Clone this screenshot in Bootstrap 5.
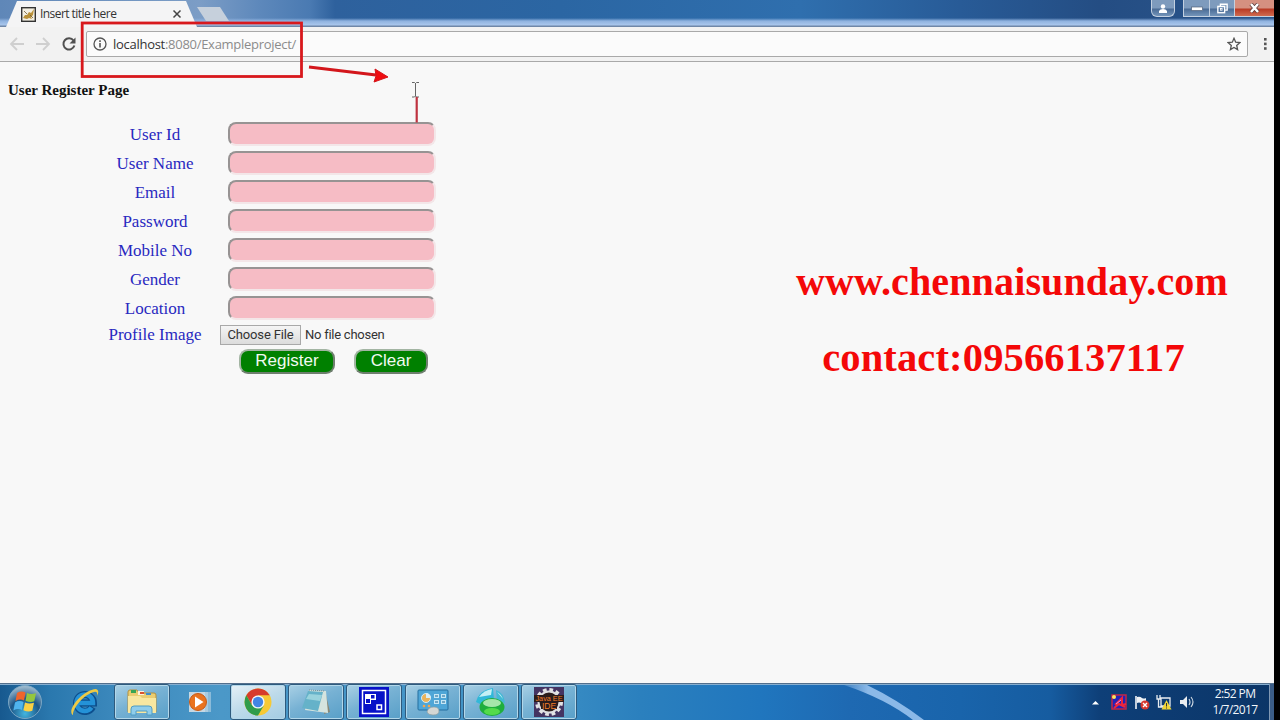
<!DOCTYPE html>
<html lang="en">
<head>
  <meta charset="UTF-8" />
  <meta name="viewport" content="width=device-width, initial-scale=1.0"/>
  <title>Insert title here</title>
  <link href="https://cdn.jsdelivr.net/npm/bootstrap@5.3.0/dist/css/bootstrap.min.css" rel="stylesheet">
  <style>
    body {
      background-color: #000;
      overflow: hidden;
    }

    svg {
      display: block;
      flex-shrink: 0;
    }

    .desktop {
      width: 1274px;
      height: 720px;
      background-color: #f8f8f8;
    }

    /* browser window */
    .titlebar {
      height: 27px;
      padding-left: 6px;
      background:
        linear-gradient(180deg, transparent 18px, #8fb2df 21px, #a9c6ec 25px, #6f87a8 26px),
        linear-gradient(90deg, #5f87b8 0, #7c9dc6 200px, #5d88bb 260px, #4a7ab2 310px, #2e619d 335px, #2b66a3 560px, #2f6fae 800px, #285b97 960px, #244d83 1100px, #2b568c 1274px);
    }

    .browser-tab {
      width: 191px;
      height: 26px;
      margin-top: 1px;
      padding: 0 15px 0 15px;
      background-color: #f4f4f5;
      clip-path: polygon(0 100%, 11px 0, 180px 0, 100% 100%);
      font: 12px/26px "Open Sans", sans-serif;
      color: #333;
    }

    .tab-title {
      letter-spacing: -0.55px;
      margin-left: 4px;
    }

    .new-tab {
      width: 32px;
      height: 14px;
      margin-top: 7px;
      background-color: #c6d0dc;
      clip-path: polygon(0 0, 23px 0, 100% 100%, 9px 100%);
    }

    .win-btn {
      height: 17px;
      border: 1px solid #c3d0e0;
      border-top: 0;
      background: linear-gradient(#7e9bbd 0 8px, #4a6b95 9px, #7394b9);
    }

    .win-close {
      background: linear-gradient(#d59080 0 8px, #b93a24 9px, #cf6b50);
    }

    .toolbar {
      height: 35px;
      padding: 0 2px 0 8px;
      background-color: #f2f2f2;
      border-bottom: 1px solid #a9a9a9;
    }

    .address {
      width: 1162px;
      height: 26px;
      margin-left: 8px;
      padding: 0 6px 0 6px;
      background-color: #fbfbfb;
      border: 1px solid #a9a9a9;
      border-radius: 2px;
      font: 13px/24px "Open Sans", sans-serif;
      color: #8b8b8b;
    }

    .url {
      margin-left: 6px;
      letter-spacing: -0.28px;
    }

    .url span {
      color: #333;
    }

    /* register page */
    .page {
      height: 621px;
      font-family: "Liberation Serif", serif;
    }

    .page-title {
      font-size: 15px;
      line-height: 18px;
      font-weight: bold;
      color: #111;
      margin: 19px 0 20px 8px;
    }

    .register {
      width: 346px;
      margin-left: 90px;
    }

    .field {
      height: 29px;
    }

    .field-label {
      width: 130px;
      padding-top: 2px;
      font: 17px/20px "Liberation Serif", serif;
      color: #2828c0;
      text-align: center;
    }

    .file-label {
      padding-top: 0;
    }

    .field-input {
      width: 208px;
      height: 24px;
      margin-left: 8px;
      background-color: #f6bcc5;
      border: 2px solid;
      border-color: #979393 #f3e6e8 #f3e6e8 #979393;
      border-radius: 8px;
      outline: 0;
    }

    .file-row {
      height: 25px;
      font: 13px/18px Roboto, sans-serif;
      letter-spacing: -0.25px;
      color: #333;
    }

    .file-row .field-label {
      letter-spacing: 0;
    }

    .choose {
      width: 81px;
      height: 20px;
      padding: 0;
      border: 1px solid #a9a9a9;
      background: linear-gradient(#f5f5f5, #dcdcdc);
      color: #333;
      letter-spacing: -0.15px;
    }

    .form-btns {
      gap: 19px;
      margin-top: 2px;
      padding-right: 8px;
    }

    .form-btn {
      height: 25px;
      padding: 0 0 2px;
      border: 2px solid;
      border-color: #a3b5a3 #6f7f6f #6f7f6f #a3b5a3;
      border-radius: 9px;
      background-color: #008000;
      color: #f1faf1;
      font: 17px/19px "Liberation Sans", sans-serif;
    }

    .register-btn { width: 96px; }
    .clear-btn { width: 74px; }

    .promo {
      width: 440px;
      margin: 130px 42px 0 0;
      font-size: 40px;
      line-height: 76px;
      font-weight: bold;
      letter-spacing: 0.14px;
      color: #f40808;
      white-space: nowrap;
    }

    .contact-line {
      font-size: 40.5px;
      padding-right: 17px;
    }

    /* taskbar */
    .taskbar {
      height: 37px;
      border-top: 1px solid #536f8c;
      background: linear-gradient(90deg, #17598f 0, #2a78ae 50px, #3a87bb 110px, #4b98c8 220px, #3f92c6 520px, #2b80be 640px, #2076be 760px, #1e69b2 850px, #1964ab 960px, #165ca0 1050px, #0e3f78 1100px, #0b3567 1274px);
      box-shadow: inset 0 1px #86aed0;
    }

    .task {
      width: 56px;
      height: 36px;
      margin-right: 2.1px;
    }

    .task-open {
      border: 1px solid #2e5a7d;
      border-radius: 3px;
      box-shadow: inset 0 0 0 1px #b2d7ea;
      background: linear-gradient(155deg, #a9d0e5 0, #78b2d4 45%, #589fc8 100%);
    }

    .task-active {
      background: linear-gradient(155deg, #e6f1f7 0, #bddaea 50%, #a3cce3 100%);
    }

    .streak {
      left: 840px;
      top: 1px;
    }

    .clock {
      width: 60px;
      font: 12px/16px "Open Sans", sans-serif;
      letter-spacing: -0.6px;
      color: #f2f6fa;
    }

    .show-desktop {
      width: 5px;
      height: 36px;
      background-color: #3a5c86;
      border-left: 1px solid #8098b4;
    }

    .markup {
      left: 0;
      top: 0;
      pointer-events: none;
    }
  </style>
</head>
<body>
  <div class="desktop position-relative d-flex flex-column">

    <div class="titlebar d-flex align-items-start">
      <div class="browser-tab d-flex align-items-center">
        <svg width="15" height="15" viewBox="0 0 15 15">
          <rect x=".7" y=".7" width="13.6" height="13.6" fill="#f3efe2" stroke="#333" stroke-width="1.4"/>
          <path d="M2 11l2-3 2 0 2-3 2 1 3-4-1 6-2 2 1 2-3-1-2 1z" fill="#b9913a"/>
          <path d="M3 4l3 3M9 8l3 3" stroke="#6f5a35" stroke-width=".8"/>
        </svg>
        <span class="tab-title">Insert title here</span>
        <svg class="ms-auto" width="10" height="10" viewBox="0 0 10 10"><path d="M1.5 1.5l7 7m0-7l-7 7" stroke="#444" stroke-width="1.5"/></svg>
      </div>
      <div class="new-tab"></div>
      <div class="d-flex ms-auto">
        <div class="win-btn rounded-bottom d-flex justify-content-center align-items-center me-2" style="width: 24px">
          <svg width="10" height="9" viewBox="0 0 10 9"><circle cx="5" cy="2.5" r="2.2" fill="#fff"/><path d="M1 9V7q1-2 4-2t4 2v2z" fill="#fff"/></svg>
        </div>
        <div class="win-btn d-flex justify-content-center align-items-center" style="width: 27px">
          <svg width="12" height="5" viewBox="0 0 12 5"><rect x=".5" y="1" width="11" height="3.5" fill="#fff" stroke="#52627a" stroke-width=".7"/></svg>
        </div>
        <div class="win-btn border-start-0 d-flex justify-content-center align-items-center" style="width: 25px">
          <svg width="11" height="11" viewBox="0 0 13 12" fill="none" stroke="#fff" stroke-width="1.6"><path d="M4 3V1h8v7H9.5"/><rect x="1" y="3.5" width="8" height="7.500"/><rect x="4" y="6" width="2" height="2" stroke-width="1"/></svg>
        </div>
        <div class="win-btn win-close border-start-0 border-end-0 d-flex justify-content-center align-items-center" style="width: 39px">
          <svg width="11" height="10" viewBox="0 0 11 10"><path d="M2 1l7 8m0-8L2 9" stroke="#5b3a3a" stroke-width="4"/><path d="M2 1l7 8m0-8L2 9" stroke="#fff" stroke-width="2.5"/></svg>
        </div>
      </div>
    </div>

    <div class="toolbar d-flex align-items-center">
      <svg width="18" height="16" viewBox="0 0 18 16" fill="none" stroke="#cfcfcf" stroke-width="1.8"><path d="M16 8H3M9 2L3 8l6 6"/></svg>
      <svg class="ms-2" width="18" height="16" viewBox="0 0 18 16" fill="none" stroke="#cfcfcf" stroke-width="1.8"><path d="M2 8h13M9 2l6 6-6 6"/></svg>
      <svg class="ms-2" width="18" height="16" viewBox="0 0 18 16"><path d="M13.5 4.500A5.600 5.600 0 1 0 14.400 9.500" fill="none" stroke="#505050" stroke-width="2"/><path d="M15.500 1.500v6h-6z" fill="#505050"/></svg>
      <div class="address d-flex align-items-center">
        <svg width="14" height="14" viewBox="0 0 14 14"><circle cx="7" cy="7" r="6" fill="none" stroke="#555" stroke-width="1.3"/><path d="M7 6v4.500M7 3.300v1.600" stroke="#555" stroke-width="1.6"/></svg>
        <span class="url"><span>localhost</span>:8080/Exampleproject/</span>
        <svg class="ms-auto" width="14" height="14" viewBox="0 0 14 14"><path d="M7 1.300l1.700 3.900 4.200.4-3.200 2.800.9 4.200L7 10.400l-3.600 2.200.9-4.200L1.100 5.600l4.200-.4z" fill="none" stroke="#555" stroke-width="1.3"/></svg>
      </div>
      <svg class="ms-auto me-1" width="6" height="14" viewBox="0 0 6 14" fill="#555"><rect x="2" y="1" width="2.6" height="2.6"/><rect x="2" y="5.6" width="2.6" height="2.6"/><rect x="2" y="10.2" width="2.6" height="2.6"/></svg>
    </div>

    <div class="page d-flex justify-content-between">
      <div>
        <h1 class="page-title">User Register Page</h1>
        <form class="register">
          <div class="field d-flex align-items-center"><label class="field-label" for="userId">User Id</label><input type="text" class="field-input" id="userId"></div>
          <div class="field d-flex align-items-center"><label class="field-label" for="userName">User Name</label><input type="text" class="field-input" id="userName"></div>
          <div class="field d-flex align-items-center"><label class="field-label" for="email">Email</label><input type="text" class="field-input" id="email"></div>
          <div class="field d-flex align-items-center"><label class="field-label" for="password">Password</label><input type="password" class="field-input" id="password"></div>
          <div class="field d-flex align-items-center"><label class="field-label" for="mobile">Mobile No</label><input type="text" class="field-input" id="mobile"></div>
          <div class="field d-flex align-items-center"><label class="field-label" for="gender">Gender</label><input type="text" class="field-input" id="gender"></div>
          <div class="field d-flex align-items-center"><label class="field-label" for="location">Location</label><input type="text" class="field-input" id="location"></div>
          <div class="file-row d-flex align-items-center">
            <span class="field-label file-label">Profile Image</span>
            <button type="button" class="choose">Choose File</button>
            <span class="ms-1">No file chosen</span>
          </div>
          <div class="form-btns d-flex justify-content-end">
            <button type="button" class="form-btn register-btn">Register</button>
            <button type="reset" class="form-btn clear-btn">Clear</button>
          </div>
        </form>
      </div>
      <div class="promo text-center">
        <div class="mt-5 pt-1">www.chennaisunday.com</div>
        <div class="contact-line">contact:09566137117</div>
      </div>
    </div>

    <div class="taskbar position-relative d-flex align-items-center">
      <svg class="streak position-absolute" width="90" height="35" viewBox="0 0 90 35">
        <defs><linearGradient id="glow"><stop offset="0" stop-color="#8bb9e8" stop-opacity=".3"/><stop offset=".3" stop-color="#8bb9e8"/></linearGradient></defs>
        <path d="M4 0h23Q58 15 84 35H73Q46 14 4 0z" fill="url(#glow)"/>
      </svg>
      <!-- start -->
      <svg style="margin-left: 7px; margin-right: 12px" width="37" height="36" viewBox="0 0 37 36">
        <defs><radialGradient id="orb" cx=".5" cy=".85" r=".9"><stop offset="0" stop-color="#43b5df"/><stop offset=".5" stop-color="#1c5687"/><stop offset="1" stop-color="#b9d0de"/></radialGradient></defs>
        <circle cx="18" cy="18" r="16.5" fill="url(#orb)" stroke="#7aa6c4"/>
        <path d="M10 9q4-2.500 8.500-.5l-1.500 8q-4-2-8.500.5z" fill="#ef652c"/>
        <path d="M20 9q4 2 9 .3l-1.700 8q-4 1.800-8.800-.5z" fill="#94c63e"/>
        <path d="M8 18.500q4-2.500 8.500-.5l-1.600 8q-4-2-8.500.5z" fill="#4fb4ee"/>
        <path d="M18 18.500q4 2 9 .3l-1.700 8q-4 1.800-8.900-.5z" fill="#fbd043"/>
      </svg>
      <div class="task d-flex justify-content-center align-items-center">
        <svg width="32" height="32" viewBox="0 0 32 32">
          <path d="M24.500 21a8.500 8.500 0 1 1 1-4H10" fill="none" stroke="#0d4f8e" stroke-width="7"/>
          <path d="M23.500 21.500A8.300 8.300 0 1 1 25 17H10" fill="none" stroke="#2492d8" stroke-width="4.5"/>
          <path d="M5 29C-2 25 14 4 28 3q4 1 1 7 1-5-3-4C17 8 5 21 5 29z" fill="#edca45"/>
        </svg>
      </div>
      <div class="task task-open d-flex justify-content-center align-items-center">
        <svg width="32" height="29" viewBox="0 0 32 29">
          <path d="M2 4q0-2 2-2h7l2 3h15q2 0 2 2v17H2z" fill="#e9cd72" stroke="#b6913c"/>
          <path d="M5 2h5v3H5z" fill="#36a554"/><path d="M12 3h6v4h-6z" fill="#fff2d9"/><path d="M14 4h4v2h-4z" fill="#d8502e"/><path d="M20 5h5v2h-5z" fill="#3c8fd0"/>
          <path d="M2 8h12l2 2h14v15H2z" fill="#f8e7a0"/>
          <path d="M5 27v-6q0-3 3-3h15q3 0 3 3v6h-5v-4H10v4z" fill="#8fcdeb" stroke="#4e9cc4"/>
        </svg>
      </div>
      <div class="task d-flex justify-content-center align-items-center">
        <svg width="26" height="24" viewBox="0 0 26 24">
          <path d="M9 2h15v20H9z" fill="#8bbbd9"/><path d="M6 2h15v20H6z" fill="#a9cbe0"/><path d="M2 2h16v20H2z" fill="#c5d8e4"/>
          <circle cx="11" cy="12" r="8.5" fill="#e9731f" stroke="#c75a17"/><path d="M8 6.500l8.500 5.500L8 17.500z" fill="#fff"/>
        </svg>
      </div>
      <div class="task task-open task-active d-flex justify-content-center align-items-center">
        <svg width="28" height="28" viewBox="0 0 28 28">
          <circle cx="14" cy="14" r="13.5" fill="#f6c935"/>
          <path d="M2.300 7.300A13.500 13.500 0 0 1 25.700 7.300H14L8.200 17.400z" fill="#d63c2c"/>
          <path d="M2.300 7.300A13.500 13.500 0 0 0 14 27.500L19.800 17.400H8.200z" fill="#2f9c4b"/>
          <circle cx="14" cy="14" r="6.6" fill="#f2f6f8"/><circle cx="14" cy="14" r="5.2" fill="#4285e4"/>
        </svg>
      </div>
      <div class="task task-open d-flex justify-content-center align-items-center">
        <svg width="30" height="28" viewBox="0 0 30 28">
          <path d="M24 3l5 21-6 2z" fill="#8a8875"/><path d="M8 2l17 1 2 22-23-3z" fill="#d5e4df"/>
          <path d="M7 3l15 1-5 19-16-3z" fill="#65b2c9"/><path d="M8 6l13 1-2 6L5 11z" fill="#99d3dd"/><path d="M8 2l16 1" stroke="#778f97" stroke-dasharray="1 1"/>
        </svg>
      </div>
      <div class="task task-open d-flex justify-content-center align-items-center">
        <svg width="30" height="30" viewBox="0 0 30 30">
          <path d="M0 0h30v30H0z" fill="#0711c8"/><path d="M3.500 3.500h23v23h-23z" fill="none" stroke="#fff" stroke-width="1.5"/>
          <path d="M6 7h11v10H6z" fill="#fff"/><path d="M12 8h3.500v3.500H12zM7 12h4v4H7zM12 13h5v4h-5z" fill="#0711c8"/>
          <path d="M18 18h4.500v4.500H18z" fill="none" stroke="#fff" stroke-width="1.5"/>
        </svg>
      </div>
      <div class="task task-open d-flex justify-content-center align-items-center">
        <svg width="32" height="28" viewBox="0 0 32 28">
          <rect x="1" y="2" width="30" height="20" rx="1" fill="#4fa6d7" stroke="#256f9f"/>
          <circle cx="9" cy="10" r="4.5" fill="#e9b35b" stroke="#d1edfa"/><path d="M9 10V5a5 5 0 0 1 5 5z" fill="#d9eef5"/>
          <path d="M17 6h5v4h-5zM24 6h5v4h-5zM17 12h5v4h-5zM24 12h5v4h-5z" fill="#c6e6f4"/><path d="M18 8h3M25 8h3M18 14h3M25 14h3" stroke="#1d6795"/>
          <circle cx="7" cy="18" r="1.3" fill="#f3a64e"/><circle cx="12" cy="18" r="1.3" fill="#f3a64e"/>
          <path d="M10 24q1-5 7-5 5 0 5 4 0 4-6 4-5 0-6-3z" fill="#d5d7d4" stroke="#8e9d9f" stroke-width=".7"/>
        </svg>
      </div>
      <div class="task task-open d-flex justify-content-center align-items-center">
        <svg width="32" height="30" viewBox="0 0 32 30">
          <path d="M1 15Q4 3 18 1l1 12-12 5z" fill="#31b8d8"/><path d="M4 10q5-7 13-8l-1 6z" fill="#c3f0f5"/>
          <path d="M21 3q8 3 9 13l-8-2z" fill="#43b9d5"/><path d="M22 5q4 2 6 7z" fill="#c3f0f5"/>
          <ellipse cx="17" cy="20" rx="12.5" ry="9" fill="#1fae3d"/><ellipse cx="17" cy="16" rx="9" ry="4" fill="#a5e6aa"/><ellipse cx="17" cy="24.5" rx="8" ry="3.5" fill="#54db4b"/>
        </svg>
      </div>
      <div class="task task-open d-flex justify-content-center align-items-center">
        <svg width="30" height="30" viewBox="0 0 30 30">
          <path d="M0 0h30v30H0z" fill="#443462"/>
          <circle cx="15" cy="15" r="12" fill="none" stroke="#e4e4e6" stroke-width="4" stroke-dasharray="3.6 2.683"/>
          <circle cx="15" cy="15" r="10.5" fill="#2b1c1c" stroke="#dedee2" stroke-width="2"/>
          <path d="M0 8h30v7H0zM7 15h16v7H7z" fill="#2b1c1c"/>
          <text x="15" y="14" text-anchor="middle" font-family="Liberation Sans, sans-serif" font-size="8" fill="#f27e2b" textLength="27" lengthAdjust="spacingAndGlyphs">Java EE</text>
          <text x="15" y="21.5" text-anchor="middle" font-family="Liberation Sans, sans-serif" font-size="8.5" fill="#f27e2b">IDE</text>
        </svg>
      </div>

      <div class="d-flex align-items-center ms-auto">
        <svg style="margin-right: 12px" width="7" height="5" viewBox="0 0 7 5"><path d="M0 4.500L3.500 1 7 4.500z" fill="#fff"/></svg>
        <svg width="16" height="16" viewBox="0 0 16 16"><path d="M1 1h14v14H1z" fill="#2222b8" stroke="#c22746" stroke-width="1.5"/><path d="M4 11l7-7v7l4-1M3 14l5-4 6 3" fill="none" stroke="#ee263b" stroke-width="2"/><circle cx="3" cy="3" r="2" fill="#ffe45a"/><path d="M5 10l5-4" stroke="#d98bf0"/></svg>
        <svg style="margin-left: 7px" width="16" height="16" viewBox="0 0 16 16"><path d="M2 2v13" stroke="#fff" stroke-width="1.5"/><path d="M3 3q3-1 5 1 2 1 4 0v6q-3 1-5-1-2-1-4 0z" fill="#eef1f5"/><circle cx="11" cy="11" r="4.5" fill="#d8372e"/><path d="M9 9l4 4m0-4l-4 4" stroke="#fff" stroke-width="1.4"/></svg>
        <svg style="margin-left: 6px" width="16" height="16" viewBox="0 0 16 16"><path d="M5 4h9v8H5zM1 1v4h3V1M2.500 5v8H8" fill="none" stroke="#e9edf1" stroke-width="1.3"/><path d="M10.500 6l5 9.500h-10z" fill="#f0d535"/><path d="M10.500 9v3.500m0 1v1" stroke="#333"/></svg>
        <svg style="margin-left: 7px; margin-right: 10px" width="16" height="16" viewBox="0 0 16 16"><path d="M1 6h3l4-4v12l-4-4H1z" fill="#e9edf1"/><path d="M10 5q2 3 0 6M12 3q4 5 0 10" fill="none" stroke="#d4dde6" stroke-width="1.1"/></svg>
        <div class="clock text-center">2:52 PM<br>1/7/2017</div>
        <div class="show-desktop ms-1"></div>
      </div>
    </div>

    <!-- annotations drawn over the window -->
    <svg class="markup position-absolute" width="450" height="130" viewBox="0 0 450 130">
      <rect x="82.2" y="23" width="219.3" height="53.5" fill="none" stroke="#d8181c" stroke-width="2.8"/>
      <path d="M309 67l67 8" stroke="#d3161b" stroke-width="2.8"/>
      <path d="M375 69l13 8-14 5 2-6z" fill="#f00c10" stroke="#d3161b"/>
      <path d="M412 82.500h2.500l1 1 1-1h2.500M415.500 83v13M412 97h2.500l1-1 1 1h2.500" fill="none" stroke="#666"/>
      <path d="M416.700 97v25.500" stroke="#bf3340" stroke-width="2.2"/>
    </svg>
  </div>

  <script src="https://cdn.jsdelivr.net/npm/bootstrap@5.3.0/dist/js/bootstrap.bundle.min.js"></script>
</body>
</html>
